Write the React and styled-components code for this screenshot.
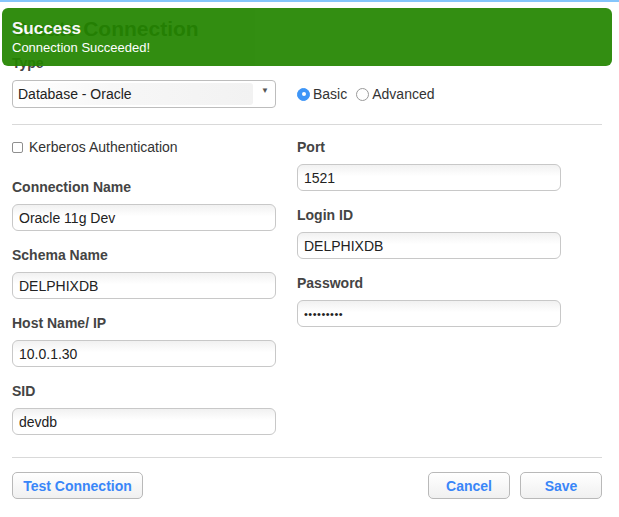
import React, { useState } from "react";
import styled, { createGlobalStyle } from "styled-components";

const GlobalStyle = createGlobalStyle`
  html, body {
    margin: 0;
    padding: 0;
    background: #fff;
  }
  body {
    font-family: "Liberation Sans", Arial, sans-serif;
    color: #333;
  }
`;

const Page = styled.div`
  position: relative;
  width: 619px;
  height: 517px;
  border-top: 2px solid #86c5fb;
  box-sizing: border-box;
  padding: 15px 17px 0 12px;
  overflow: hidden;
`;

const Toast = styled.div`
  position: absolute;
  top: 6px;
  left: 2px;
  width: 610px;
  height: 58px;
  box-sizing: border-box;
  padding: 11px 10px;
  border-radius: 6px;
  background: #238500;
  opacity: 0.93;
  color: #fff;
`;

const ToastTitle = styled.div`
  font-size: 17px;
  font-weight: bold;
  line-height: 20px;
`;

const ToastText = styled.div`
  font-size: 13px;
  line-height: 16px;
  margin-top: 1px;
`;

const Title = styled.h1`
  margin: 0;
  font-size: 21px;
  line-height: 24px;
  font-weight: bold;
  color: #333;
`;

const Grid = styled.div`
  display: grid;
  grid-template-columns: 264px 264px;
  column-gap: 21px;
  align-items: start;
`;

const Column = styled.div`
  display: flex;
  flex-direction: column;
`;

const Label = styled.label`
  display: block;
  font-size: 14px;
  line-height: 20px;
  font-weight: bold;
  color: #444;
  margin-top: ${(p) => p.$mt || 0}px;
  margin-bottom: 7px;
`;

const Field = styled.div`
  margin-bottom: ${(p) => (p.$last ? 0 : 14)}px;
`;

const Input = styled.input`
  display: block;
  width: 100%;
  height: 27px;
  box-sizing: border-box;
  padding: 0 6px;
  border: 1px solid #c8c8c8;
  border-radius: 6px;
  background: linear-gradient(#f1f1f1, #fff 45%);
  font-family: "Liberation Sans", Arial, sans-serif;
  font-size: 14px;
  color: #222;
  outline: none;
  &[type="password"] {
    font-size: 11px;
    letter-spacing: 0.5px;
  }
`;

const SelectBox = styled.div`
  position: relative;
  height: 28px;
  box-sizing: border-box;
  border: 1px solid #bdbdbd;
  border-radius: 4px;
  background: #fff;
  padding: 2px 22px 2px 2px;
`;

const SelectFace = styled.div`
  height: 100%;
  border-radius: 3px;
  background: linear-gradient(90deg, #fff, #f7f7f7 40%, #f2f2f2);
  font-size: 14px;
  line-height: 22px;
  padding-left: 3px;
  color: #222;
`;

const Arrow = styled.span`
  position: absolute;
  right: 6px;
  top: 5px;
  font-size: 8px;
  color: #555;
`;

const RadioRow = styled.div`
  align-self: end;
  display: flex;
  align-items: center;
  height: 28px;
  font-size: 14px;
  color: #333;
`;

const RadioOption = styled.label`
  display: flex;
  align-items: center;
  margin-right: 9px;
  cursor: pointer;
`;

const RadioDot = styled.span`
  width: 13px;
  height: 13px;
  box-sizing: border-box;
  border-radius: 50%;
  margin-right: 3px;
  display: inline-flex;
  align-items: center;
  justify-content: center;
  border: 1px solid ${(p) => (p.$on ? "#3d95f7" : "#9a9a9a")};
  background: ${(p) => (p.$on ? "#3d95f7" : "#fff")};
  &::after {
    content: "";
    width: 4px;
    height: 4px;
    border-radius: 50%;
    background: ${(p) => (p.$on ? "#fff" : "transparent")};
  }
`;

const Divider = styled.hr`
  border: 0;
  border-top: 1px solid #d9d9d9;
  margin: ${(p) => p.$m};
`;

const CheckRow = styled.label`
  display: flex;
  align-items: center;
  height: 20px;
  font-size: 14px;
  color: #333;
  margin-bottom: 20px;
`;

const CheckBox = styled.span`
  width: 11px;
  height: 11px;
  box-sizing: border-box;
  border: 1px solid #8f8f8f;
  border-radius: 2px;
  background: #fff;
  margin-right: 6px;
`;

const Footer = styled.div`
  display: flex;
  align-items: center;
`;

const Button = styled.button`
  height: 27px;
  min-width: ${(p) => p.$w || 82}px;
  box-sizing: border-box;
  padding: 0 10px;
  border: 1px solid #b9b9b9;
  border-radius: 5px;
  background: linear-gradient(#fff, #f0f0f0);
  font-family: "Liberation Sans", Arial, sans-serif;
  font-size: 14px;
  font-weight: bold;
  color: #3a86f8;
  margin-left: ${(p) => p.$ml || 0}px;
  cursor: pointer;
`;

const Spacer = styled.div`
  flex: 1;
`;

const leftFields = [
  ["Connection Name", "Oracle 11g Dev"],
  ["Schema Name", "DELPHIXDB"],
  ["Host Name/ IP", "10.0.1.30"],
  ["SID", "devdb"],
];

const rightFields = [
  ["Port", "1521", "text"],
  ["Login ID", "DELPHIXDB", "text"],
  ["Password", "delphixdb", "password"],
];

export default function App() {
  const [mode, setMode] = useState("basic");

  return (
    <Page>
      <GlobalStyle />
      <Title>Create Connection</Title>
      <Grid>
        <div>
          <Label $mt={12}>Type</Label>
          <SelectBox>
            <SelectFace>Database - Oracle</SelectFace>
            <Arrow>▼</Arrow>
          </SelectBox>
        </div>
        <RadioRow>
          <RadioOption onClick={() => setMode("basic")}>
            <RadioDot $on={mode === "basic"} />
            Basic
          </RadioOption>
          <RadioOption onClick={() => setMode("advanced")}>
            <RadioDot $on={mode === "advanced"} />
            Advanced
          </RadioOption>
        </RadioRow>
      </Grid>
      <Divider $m="16px 0 12px" />
      <Grid>
        <Column>
          <CheckRow>
            <CheckBox />
            Kerberos Authentication
          </CheckRow>
          {leftFields.map(([label, value], i) => (
            <Field key={label} $last={i === leftFields.length - 1}>
              <Label>{label}</Label>
              <Input defaultValue={value} />
            </Field>
          ))}
        </Column>
        <Column>
          {rightFields.map(([label, value, type]) => (
            <Field key={label}>
              <Label>{label}</Label>
              <Input type={type} defaultValue={value} />
            </Field>
          ))}
        </Column>
      </Grid>
      <Divider $m="22px 0 14px" />
      <Footer>
        <Button $w={131}>Test Connection</Button>
        <Spacer />
        <Button>Cancel</Button>
        <Button $ml={10}>Save</Button>
      </Footer>
      <Toast>
        <ToastTitle>Success</ToastTitle>
        <ToastText>Connection Succeeded!</ToastText>
      </Toast>
    </Page>
  );
}
